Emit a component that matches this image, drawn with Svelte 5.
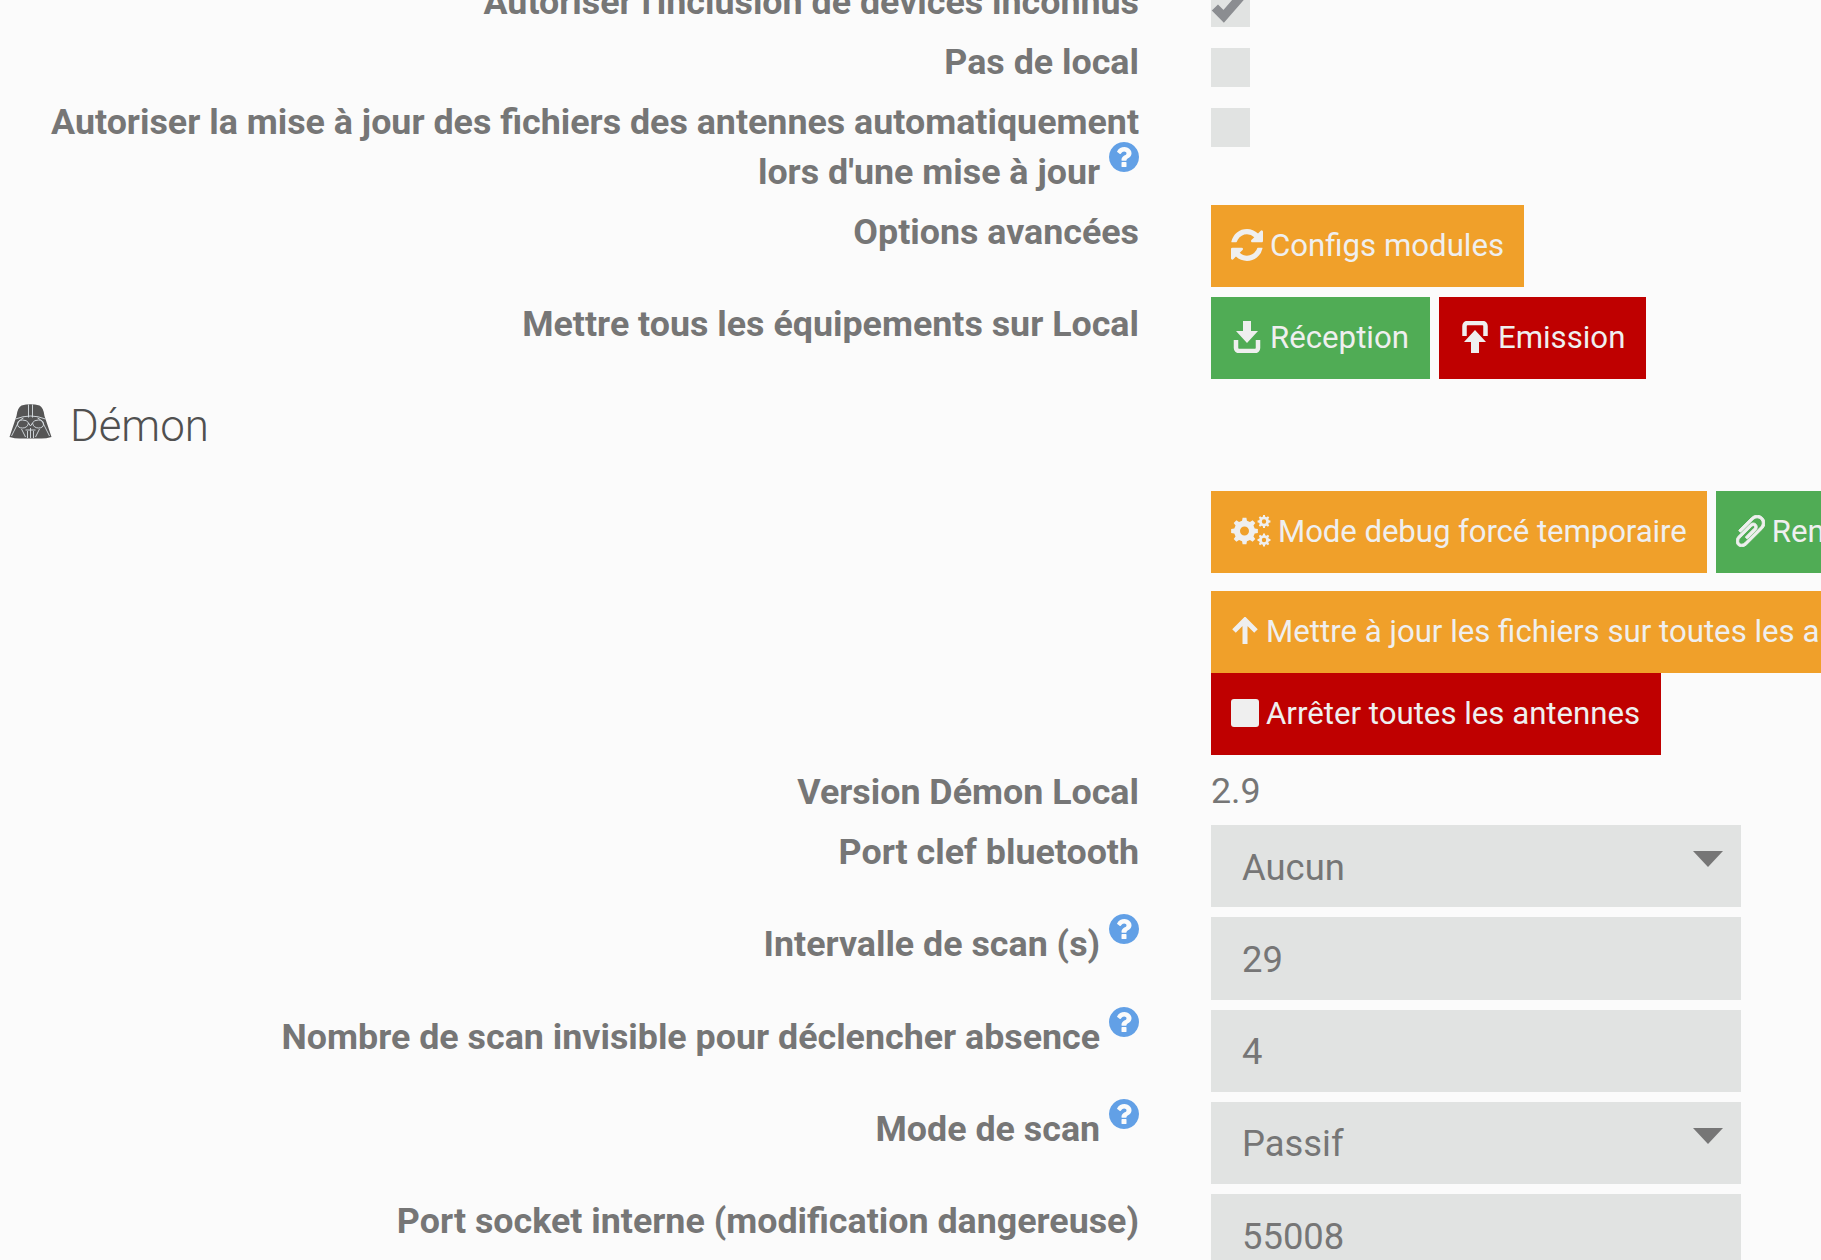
<script>
  const help = "M1024 1376v-192q0-14-9-23t-23-9h-192q-14 0-23 9t-9 23v192q0 14 9 23t23 9h192q14 0 23-9t9-23zm256-672q0-88-55.5-163t-138.5-116-170-41q-243 0-371 213-15 24 8 42l132 100q7 6 19 6 16 0 25-12 53-68 86-92 34-24 86-24 48 0 85.5 26t37.5 59q0 38-20 61t-68 45q-63 28-115.5 86.5t-52.5 125.5v36q0 14 9 23t23 9h192q14 0 23-9t9-23q0-19 21.5-49.5t54.5-49.5q32-18 49-28.5t46-35 44.5-48 28-60.5 12.5-81zm384 192q0 209-103 385.5t-279.5 279.5-385.5 103-385.5-103-279.5-279.5-103-385.5 103-385.5 279.5-279.5 385.5-103 385.5 103 279.5 279.5 103 385.5z";

  function gear(cx, cy, ro, ri, hole, n) {
    const pts = [];
    const step = (Math.PI * 2) / n;
    for (let i = 0; i < n; i++) {
      const a = i * step;
      const w = step * 0.24;
      [[ri, a - w * 1.25], [ro, a - w * 0.75], [ro, a + w * 0.75], [ri, a + w * 1.25]].forEach(([r, t]) => {
        pts.push(`${(cx + r * Math.cos(t)).toFixed(2)} ${(cy + r * Math.sin(t)).toFixed(2)}`);
      });
    }
    return `M${pts.join("L")}Z M${cx - hole} ${cy}a${hole} ${hole} 0 1 0 ${hole * 2} 0a${hole} ${hole} 0 1 0 ${-hole * 2} 0Z`;
  }
  const cogs = [gear(13.5, 16, 13.5, 10.5, 4.5, 8), gear(33, 6.5, 6.5, 5, 2.2, 8), gear(33, 25, 6.5, 5, 2.2, 8)].join(" ");
</script>

{#snippet q()}
  <svg class="help" viewBox="128 128 1536 1536" aria-hidden="true"><path d={help} fill-rule="evenodd" /></svg>
{/snippet}

<div class="page">
  <form class="form" onsubmit={(e) => e.preventDefault()}>
    <div class="row">
      <div class="label">Autoriser l'inclusion de devices inconnus</div>
      <div class="ctl">
        <span class="check">
          <svg viewBox="0 0 40 40" aria-hidden="true"><path d="M4 20l9 9L34 5" fill="none" stroke="#8b8d91" stroke-width="9" /></svg>
        </span>
      </div>
    </div>
    <div class="row">
      <div class="label">Pas de local</div>
      <div class="ctl"><span class="check"></span></div>
    </div>
    <div class="row">
      <div class="label">Autoriser la mise à jour des fichiers des antennes automatiquement<br />lors d'une mise à jour {@render q()}</div>
      <div class="ctl"><span class="check"></span></div>
    </div>
    <div class="row">
      <div class="label">Options avancées</div>
      <div class="ctl btns">
        <button type="button" class="btn orange">
          <svg class="ico" viewBox="0 0 1536 1536" aria-hidden="true"><path d="M1511 928q0 5-1 7-64 268-268 434.5t-478 166.5q-146 0-282.5-55t-243.5-157l-129 129q-19 19-45 19t-45-19-19-45v-448q0-26 19-45t45-19h448q26 0 45 19t19 45-19 45l-137 137q71 66 161 102t187 36q134 0 250-65t186-179q11-17 53-117 8-23 30-23h192q13 0 22.5 9.5t9.5 22.5zm25-800v448q0 26-19 45t-45 19h-448q-26 0-45-19t-19-45 19-45l138-138q-148-137-349-137-134 0-250 65t-186 179q-11 17-53 117-8 23-30 23h-199q-13 0-22.5-9.5t-9.5-22.5v-7q65-268 270-434.5t480-166.5q146 0 284 55.5t245 156.5l130-129q19-19 45-19t45 19 19 45z" /></svg>
          Configs modules
        </button>
      </div>
    </div>
    <div class="row">
      <div class="label">Mettre tous les équipements sur Local</div>
      <div class="ctl btns">
        <button type="button" class="btn green wider">
          <svg class="ico" viewBox="-3 0 32 32" aria-hidden="true"><path d="M9 0h8v10h7L13 22 2 10h7z" /><path d="M2 19v8a3 3 0 0 0 3 3h16a3 3 0 0 0 3-3v-8" fill="none" stroke="currentColor" stroke-width="4.500" /></svg>
          Réception
        </button>
        <button type="button" class="btn red wider">
          <svg class="ico" viewBox="-3 0 32 32" aria-hidden="true"><path d="M9 32h8V21h7L13 9 2 21h7z" /><path d="M2.500 15V5a3 3 0 0 1 3-3h15a3 3 0 0 1 3 3v10" fill="none" stroke="currentColor" stroke-width="4.500" /></svg>
          Emission
        </button>
      </div>
    </div>

    <h2 class="legend">
      <svg class="vader" viewBox="0 0 42 35" aria-hidden="true">
        <path d="M12 1.500Q21-1 30 1.500q4 2 5 10.500l7 21q-7 2-12 1.500H12q-5 .5-12-1.500l7-21q1-8.500 5-10.500z" fill="#555" />
        <g fill="none" stroke="#d9e0e4" stroke-width="0.9">
          <path d="M19 0.500v13M23 0.500v13M6 15q15-6 30 0M2 32l7-14q2-3 5-4M40 32l-7-14q-2-3-5-4" />
          <path d="M8 20q0-4 5-4t6 3q-1 5-6 5t-5-4zM34 20q0-4-5-4t-6 3q1 5 6 5t5-4z" />
          <path d="M19 19l2 3 2-3M12 25l4 8M30 25l-4 8M16 26h10M18 27v7M21 24v10M24 27v7" />
        </g>
      </svg>
      <span class="legend-text">Démon</span>
    </h2>

    <div class="row">
      <div class="label"></div>
      <div class="ctl stack">
        <div class="btns line">
          <button type="button" class="btn orange tight">
            <svg class="ico cogs" viewBox="0 0 40 32" aria-hidden="true"><path d={cogs} fill-rule="evenodd" /></svg>
            Mode debug forcé temporaire
          </button>
          <button type="button" class="btn green">
            <svg class="ico clip" viewBox="196 120 1400 1550" aria-hidden="true"><g transform="matrix(-1 0 0 1 1792 0)"><path stroke="currentColor" stroke-width="45" d="M1596 1385q0 117-79 196t-196 79q-135 0-235-100l-777-776q-113-115-113-271 0-159 110-270t269-111q158 0 273 113l605 606q10 10 10 22 0 16-30.500 46.500t-46.500 30.500q-13 0-23-10l-606-607q-79-77-181-77-106 0-179 75t-73 181q0 105 76 181l776 777q63 63 145 63 64 0 106-42t42-106q0-82-63-145l-581-581q-26-24-60-24-29 0-48 19t-19 48q0 32 25 59l410 410q10 10 10 22 0 16-31 47t-47 31q-12 0-22-10l-410-410q-63-61-63-149 0-82 57-139t139-57q88 0 149 63l581 581q100 98 100 235z" /></g></svg>
            Renvoyer les logs
          </button>
        </div>
        <div>
          <button type="button" class="btn orange">
            <svg class="ico up" viewBox="0 0 28 28" aria-hidden="true"><path d="M14 27V4M3 14L14 3l11 11" fill="none" stroke="currentColor" stroke-width="5" /></svg>
            Mettre à jour les fichiers sur toutes les antennes
          </button>
        </div>
        <div>
          <button type="button" class="btn red wider">
            <span class="stop"></span>
            Arrêter toutes les antennes
          </button>
        </div>
      </div>
    </div>

    <div class="row">
      <div class="label">Version Démon Local</div>
      <div class="ctl value">2.9</div>
    </div>
    <div class="row">
      <div class="label">Port clef bluetooth</div>
      <div class="ctl"><div class="sel"><select class="field"><option>Aucun</option></select></div></div>
    </div>
    <div class="row">
      <div class="label">Intervalle de scan (s) {@render q()}</div>
      <div class="ctl"><input class="field" value="29" /></div>
    </div>
    <div class="row">
      <div class="label">Nombre de scan invisible pour déclencher absence {@render q()}</div>
      <div class="ctl"><input class="field" value="4" /></div>
    </div>
    <div class="row">
      <div class="label">Mode de scan {@render q()}</div>
      <div class="ctl"><div class="sel"><select class="field"><option>Passif</option></select></div></div>
    </div>
    <div class="row">
      <div class="label">Port socket interne (modification dangereuse)</div>
      <div class="ctl"><input class="field" value="55008" /></div>
    </div>
  </form>
</div>

<style>
  :global(body) {
    margin: 0;
    background: #fbfbfb;
  }
  .page {
    height: 1260px;
    overflow: hidden;
    background: #fbfbfb;
    font-family: Roboto, "Liberation Sans", sans-serif;
    font-size: 35.8px;
    color: #767676;
  }
  .form {
    margin-top: -25px;
    display: flex;
    flex-direction: column;
    gap: 10px;
  }
  .row {
    display: grid;
    grid-template-columns: 1139px 1fr;
    column-gap: 72px;
  }
  .label {
    text-align: right;
    font-weight: 700;
    line-height: 50px;
    min-height: 50px;
    margin: 2px 0 -2px;
  }
  .ctl {
    min-width: 0;
    white-space: nowrap;
  }
  .check {
    display: block;
    width: 39px;
    height: 39px;
    margin: 13px 0 -2px;
    background: #e1e3e2;
  }
  .check svg {
    display: block;
    width: 39px;
    height: 39px;
  }
  .help {
    width: 30px;
    height: 30px;
    fill: #62a0e6;
    vertical-align: top;
    margin-top: -5px;
  }
  .btns {
    display: flex;
    gap: 9px;
  }
  .stack {
    display: flex;
    flex-direction: column;
  }
  .line {
    margin-bottom: 18px;
  }
  .btn {
    display: inline-flex;
    align-items: center;
    gap: 7px;
    height: 82px;
    padding: 0 20px 2px;
    border: 0;
    margin: 0;
    box-sizing: border-box;
    font: inherit;
    font-size: 31.2px;
    color: #efefef;
    white-space: nowrap;
    flex: none;
    vertical-align: top;
  }
  .orange { background: #f0a02a; }
  .green { background: #50ac55; }
  .red { background: #bf0000; }
  .wider { padding-right: 21px; }
  .tight { letter-spacing: -0.09px; }
  .ico {
    height: 32px;
    width: 32px;
    fill: currentColor;
    flex: none;
  }
  .cogs { width: 40px; height: 32px; }
  .clip { width: 29px; height: 32px; }
  .up { width: 28px; height: 28px; }
  .stop {
    display: block;
    width: 28px;
    height: 28px;
    border-radius: 3px;
    background: #efefef;
  }
  .legend {
    margin: 0;
    height: 92px;
    font-weight: 300;
    font-size: 43.8px;
    line-height: 1;
    color: #505050;
    display: flex;
    align-items: flex-start;
    gap: 18px;
    padding: 15px 0 0 9px;
    box-sizing: border-box;
  }
  .legend-text {
    margin-top: 1px;
  }
  .vader {
    width: 43px;
    height: 35px;
  }
  .value {
    line-height: 50px;
    margin: 1px 0 -1px;
  }
  .field {
    display: block;
    width: 530px;
    height: 82.25px;
    box-sizing: border-box;
    border: 0;
    padding: 2px 31px 0;
    margin: 0;
    background: #e1e3e2;
    font: inherit;
    font-size: 36.4px;
    color: #767676;
    appearance: none;
    border-radius: 0;
    outline: 0;
  }
  .sel {
    position: relative;
    width: 530px;
  }
  .sel::after {
    content: "";
    position: absolute;
    top: 26px;
    right: 18px;
    border-style: solid;
    border-width: 16px 15px 0;
    border-color: #767676 transparent transparent;
  }
</style>
